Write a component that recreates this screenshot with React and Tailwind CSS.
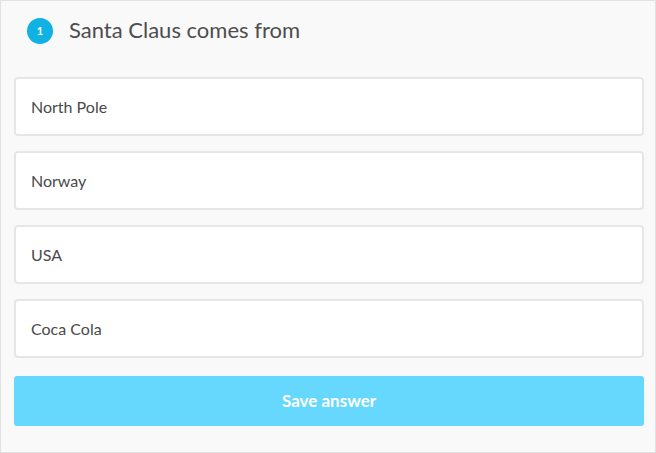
import React from "react";

const options = ["North Pole", "Norway", "USA", "Coca Cola"];

export default function App() {
  return (
    <div
      className="w-[656px] h-[453px] bg-[#f9f9f9] border border-[#e3e3e3] pl-[13px] pr-[11px] text-[#444]"
      style={{ fontFamily: '"Source Sans Pro", Lato, "Noto Sans", sans-serif' }}
    >
      <div className="flex items-center h-[59px] pl-[13px] pt-[1px]">
        <div className="w-[26px] h-[26px] rounded-full bg-[#10b2e3] text-white text-[11px] font-bold flex items-center justify-center">
          1
        </div>
        <h1 className="ml-[16px] text-[22px] leading-none pb-[2px] text-[#4d4d4d]">Santa Claus comes from</h1>
      </div>
      <div className="mt-[17px] flex flex-col gap-[15px]">
        {options.map((o) => (
          <div
            key={o}
            className="h-[59px] bg-white border-2 border-[#e6e6e6] rounded-[4px] flex items-center pl-[15px] text-[16px] text-[#4a4a4a]"
          >
            {o}
          </div>
        ))}
      </div>
      <button className="mt-[18px] w-full h-[50px] bg-[#66d8fd] rounded-[3px] text-white text-[17px] font-bold">
        Save answer
      </button>
    </div>
  );
}
